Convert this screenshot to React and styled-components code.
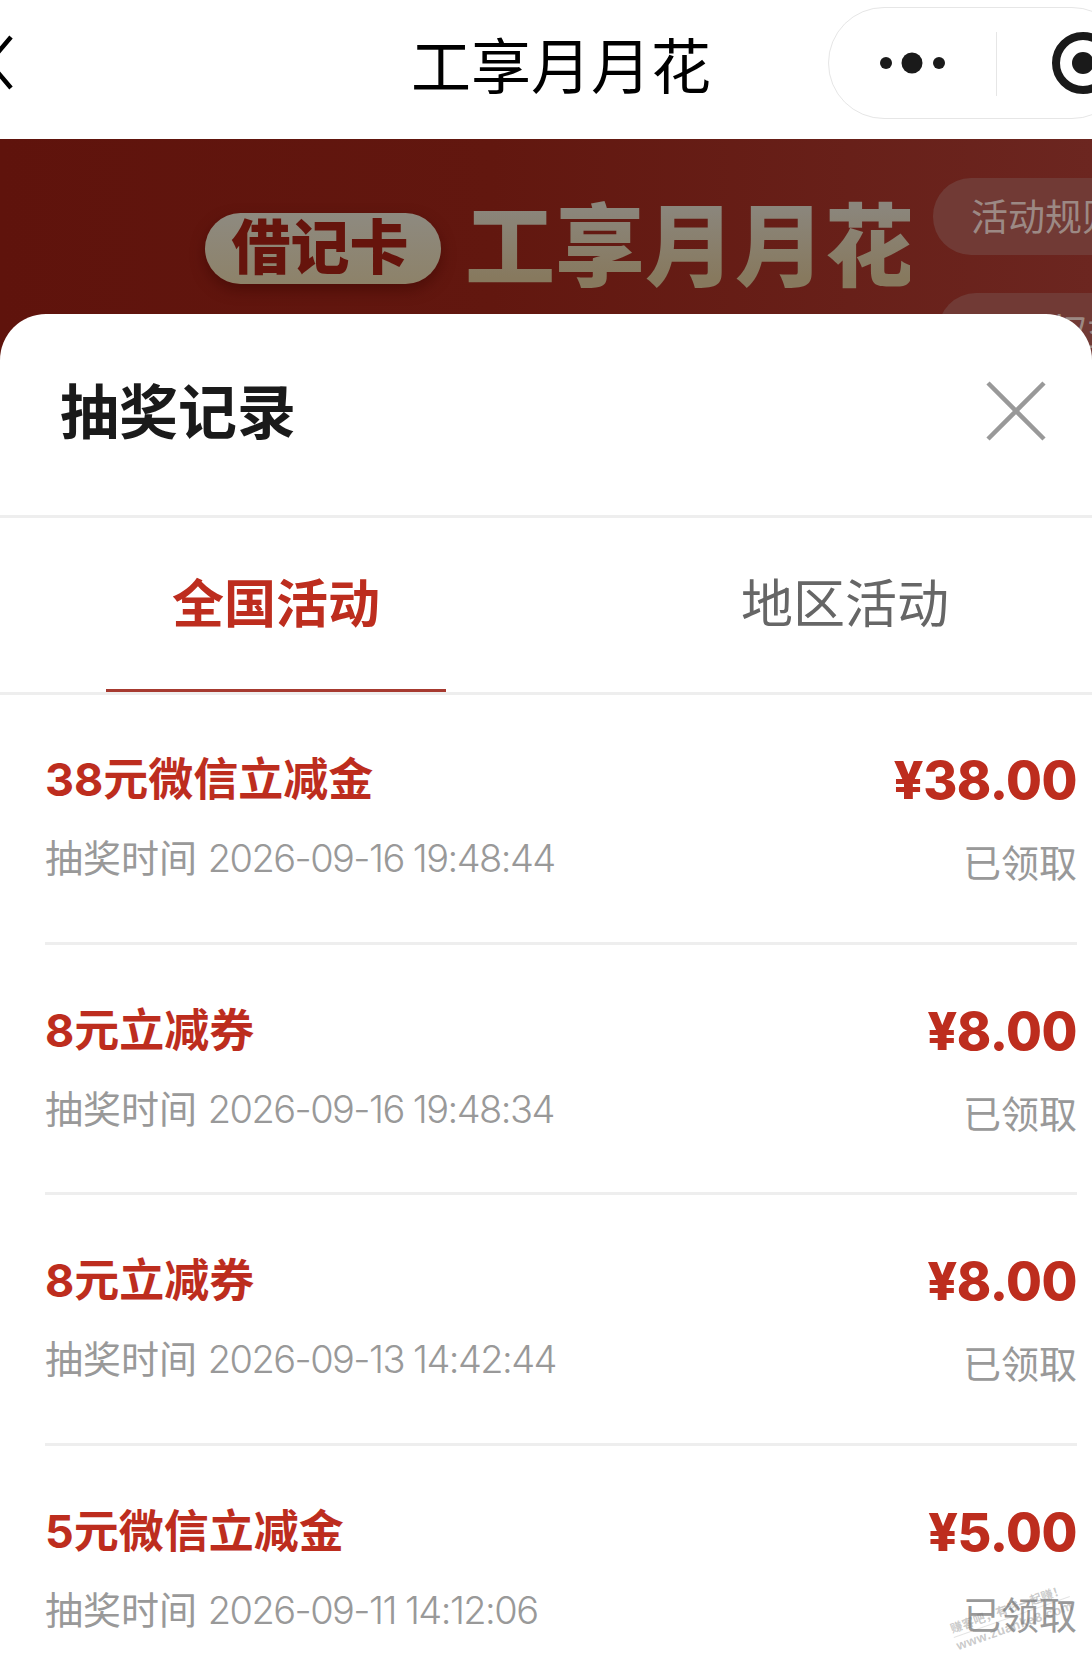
import React from "react";
import styled, { createGlobalStyle } from "styled-components";

const GlobalStyle = createGlobalStyle`
  html, body {
    margin: 0;
    padding: 0;
    background: #fff;
  }
  body {
    font-family: "Noto Sans CJK SC", "Noto Sans", sans-serif;
  }
`;

const records = [
  { title: "38元微信立减金", time: "2026-09-16 19:48:44", amount: "38.00" },
  { title: "8元立减券", time: "2026-09-16 19:48:34", amount: "8.00" },
  { title: "8元立减券", time: "2026-09-13 14:42:44", amount: "8.00" },
  { title: "5元微信立减金", time: "2026-09-11 14:12:06", amount: "5.00" },
];

const Page = styled.div`
  position: relative;
  width: 1092px;
  height: 1670px;
  overflow: hidden;
  background: #fff;
`;

const NavBar = styled.header`
  height: 139px;
  display: flex;
  align-items: flex-start;
  background: #fff;
`;

const BackIcon = styled.svg`
  width: 14px;
  height: 139px;
  flex-shrink: 0;
`;

const NavTitle = styled.h1`
  width: 298px;
  margin: 27px 0 0 397px;
  font-size: 60px;
  line-height: 72px;
  font-weight: 400;
  color: #000;
  white-space: nowrap;
  flex-shrink: 0;
`;

const Capsule = styled.div`
  margin: 7px 0 0 119px;
  width: 300px;
  height: 112px;
  flex-shrink: 0;
  display: flex;
  align-items: center;
  box-sizing: border-box;
  border: 1px solid #e6e6e6;
  border-radius: 56px;
`;

const Banner = styled.section`
  height: 225px;
  display: flex;
  align-items: flex-start;
  overflow: hidden;
  background: linear-gradient(90deg, #5f130c 0%, #62170f 45%, #6c2620 100%);
`;

const CardTag = styled.div`
  margin: 74px 0 0 205px;
  width: 236px;
  height: 71px;
  box-sizing: border-box;
  padding: 0 6px 10px 0;
  flex-shrink: 0;
  display: flex;
  align-items: center;
  justify-content: center;
  border-radius: 36px;
  background: linear-gradient(180deg, #8e8a80 0%, #8d8269 100%);
  box-shadow: 0 6px 14px rgba(60, 8, 4, 0.55);
  font-size: 59px;
  line-height: 61px;
  font-weight: 900;
  color: #66140c;
`;

const BannerTitle = styled.div`
  margin: 46px 0 0 24px;
  width: 445px;
  flex-shrink: 0;
  font-size: 90px;
  line-height: 110px;
  font-weight: 900;
  white-space: nowrap;
  background: linear-gradient(180deg, #8b867c 20%, #87795e 85%);
  -webkit-background-clip: text;
  background-clip: text;
  color: transparent;
`;

const SideLinks = styled.div`
  margin: 39px 0 0 23px;
  display: flex;
  flex-direction: column;
  gap: 38px;
  flex-shrink: 0;
`;

const SideLink = styled.div`
  width: 240px;
  height: 77px;
  box-sizing: border-box;
  padding-left: 38px;
  margin-left: ${(p) => p.$inset || 0}px;
  border-radius: 38px;
  background: #713a35;
  color: #9c8984;
  font-size: 37px;
  line-height: 74px;
  white-space: nowrap;
`;

const Sheet = styled.main`
  margin-top: -50px;
  position: relative;
  background: #fff;
  border-radius: 46px 46px 0 0;
`;

const SheetHeader = styled.div`
  height: 204px;
  box-sizing: border-box;
  padding: 60px 46px 0 60px;
  display: flex;
  justify-content: space-between;
  align-items: flex-start;
  border-bottom: 3px solid #eeeeee;
`;

const SheetTitle = styled.h2`
  margin: 0;
  font-size: 59px;
  line-height: 70px;
  font-weight: 700;
  color: #1a1a1a;
`;

const CloseIcon = styled.svg`
  width: 60px;
  height: 60px;
  margin-top: 7px;
`;

const Tabs = styled.div`
  height: 177px;
  display: grid;
  grid-template-columns: 552px 1fr;
  box-sizing: border-box;
  border-bottom: 3px solid #eeeeee;
`;

const Tab = styled.div`
  position: relative;
  padding-top: 50px;
  padding-left: ${(p) => (p.$active ? 0 : 46)}px;
  text-align: center;
  font-size: 52px;
  line-height: 66px;
  font-weight: ${(p) => (p.$active ? 700 : 400)};
  color: ${(p) => (p.$active ? "#bd2d1e" : "#666666")};
  ${(p) =>
    p.$active &&
    `
    &::after {
      content: "";
      position: absolute;
      left: 106px;
      bottom: 0;
      width: 340px;
      height: 3px;
      background: #a63a30;
    }
  `}
`;

const List = styled.div`
  margin-top: -1px;
  padding: 0 15px 0 45px;
`;

const Row = styled.article`
  height: 250.5px;
  box-sizing: border-box;
  padding-top: 55px;
  display: flex;
  justify-content: space-between;
  border-bottom: ${(p) => (p.$last ? "0" : "3px solid #eeeeee")};
`;

const RowLeft = styled.div`
  margin-top: 2px;
  display: flex;
  flex-direction: column;
  gap: 23px;
`;

const RowRight = styled.div`
  display: flex;
  flex-direction: column;
  align-items: flex-end;
  gap: 21px;
`;

const PrizeName = styled.div`
  font-family: "Inter", "Noto Sans CJK SC", sans-serif;
  font-size: 45px;
  line-height: 58px;
  font-weight: 700;
  color: #bd2d1e;
  white-space: nowrap;
`;

const DrawTime = styled.div`
  font-family: "Inter", "Noto Sans CJK SC", sans-serif;
  font-size: 38px;
  line-height: 52px;
  color: #999999;
  white-space: nowrap;
`;

const TimeValue = styled.span`
  font-weight: 300;
  letter-spacing: -1.55px;
`;

const Amount = styled.div`
  font-family: "Inter", "Liberation Sans", sans-serif;
  font-size: 52px;
  line-height: 63px;
  font-weight: 800;
  letter-spacing: -0.5px;
  color: #bd2d1e;
  white-space: nowrap;
`;

const Status = styled.div`
  font-size: 38px;
  line-height: 56px;
  color: #999999;
  white-space: nowrap;
`;

const Watermark = styled.div`
  position: absolute;
  left: 948px;
  top: 1621px;
  transform: rotate(-19.5deg);
  transform-origin: left top;
  color: rgba(120, 120, 120, 0.4);
  font-size: 12px;
  line-height: 16px;
  font-weight: 700;
  white-space: nowrap;
`;

const WatermarkRule = styled.div`
  height: 1px;
  margin: 1px 0;
  background: rgba(120, 120, 120, 0.2);
`;

const WatermarkUrl = styled.div`
  font-family: "Liberation Sans", sans-serif;
  font-size: 13px;
  letter-spacing: 0.5px;
`;

export default function App() {
  return (
    <Page>
      <GlobalStyle />
      <NavBar>
        <BackIcon viewBox="0 0 14 139">
          <path d="M11 37 L-10.6 62.5 L11 88" fill="none" stroke="#000" strokeWidth="4.5" />
        </BackIcon>
        <NavTitle>工享月月花</NavTitle>
        <Capsule>
          <svg width="264" height="110" viewBox="829 8 264 110">
            <circle cx="886" cy="63" r="6" fill="#1a1a1a" />
            <circle cx="912" cy="63" r="10.5" fill="#1a1a1a" />
            <circle cx="939" cy="63" r="6" fill="#1a1a1a" />
            <line x1="996.5" y1="32" x2="996.5" y2="96" stroke="#e6e6e6" strokeWidth="1" />
            <circle cx="1083" cy="63" r="27" fill="none" stroke="#1a1a1a" strokeWidth="8" />
            <circle cx="1083" cy="63" r="11" fill="#1a1a1a" />
          </svg>
        </Capsule>
      </NavBar>
      <Banner>
        <CardTag>借记卡</CardTag>
        <BannerTitle>工享月月花</BannerTitle>
        <SideLinks>
          <SideLink>活动规则</SideLink>
          <SideLink $inset={5}>生态权益</SideLink>
        </SideLinks>
      </Banner>
      <Sheet>
        <SheetHeader>
          <SheetTitle>抽奖记录</SheetTitle>
          <CloseIcon viewBox="0 0 60 60">
            <path d="M2 2 L58 58 M58 2 L2 58" stroke="#999" strokeWidth="4.5" fill="none" />
          </CloseIcon>
        </SheetHeader>
        <Tabs>
          <Tab $active>全国活动</Tab>
          <Tab>地区活动</Tab>
        </Tabs>
        <List>
          {records.map((r, i) => (
            <Row key={i} $last={i === records.length - 1}>
              <RowLeft>
                <PrizeName>{r.title}</PrizeName>
                <DrawTime>抽奖时间 <TimeValue>{r.time}</TimeValue></DrawTime>
              </RowLeft>
              <RowRight>
                <Amount>¥{r.amount}</Amount>
                <Status>已领取</Status>
              </RowRight>
            </Row>
          ))}
        </List>
      </Sheet>
      <Watermark>
        赚客吧，有钱一起赚！
        <WatermarkRule />
        <WatermarkUrl>www.zuanke8.com</WatermarkUrl>
      </Watermark>
    </Page>
  );
}
